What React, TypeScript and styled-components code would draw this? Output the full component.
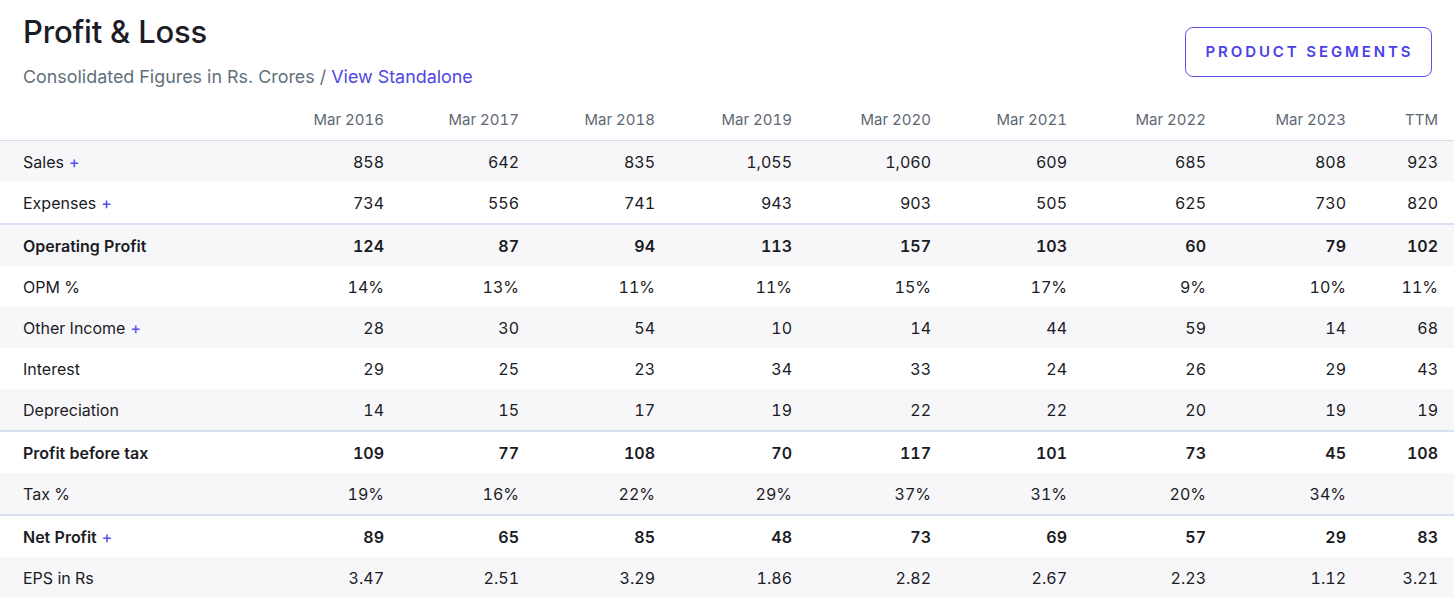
import styled, { createGlobalStyle } from 'styled-components';

const GlobalStyle = createGlobalStyle`
  body {
    margin: 0;
    background: #fff;
    font-family: Inter, "Noto Sans", sans-serif;
    color: #1f1f29;
  }
`;

// Styled components
const Page = styled.div`
  width: 1456px;
`;

const Header = styled.div`
  display: flex;
  justify-content: space-between;
  align-items: flex-start;
  padding: 0 24px 0 23px;
`;

const TitleBlock = styled.div`
  display: flex;
  flex-direction: column;
`;

const Title = styled.h2`
  margin: 12px 0 0;
  font-size: 31px;
  font-weight: 450;
  line-height: 40px;
  color: #1c1c27;
  letter-spacing: -0.2px;
`;

const SubTitle = styled.p`
  margin: 13px 0 0;
  font-size: 17.9px;
  line-height: 24px;
  color: #606f7b;
`;

const LinkText = styled.a`
  color: #4f46e5;
  text-decoration: none;
  cursor: pointer;
`;

const SegmentsButton = styled.button`
  margin-top: 27px;
  width: 247px;
  height: 50px;
  border: 1px solid #5b53f0;
  border-radius: 8px;
  background: #fff;
  color: #4a41e8;
  font-family: Inter, "Noto Sans", sans-serif;
  font-size: 15px;
  font-weight: 600;
  letter-spacing: 2.9px;
  text-transform: uppercase;
  padding: 0 0 2px 2px;
  cursor: pointer;
`;

const Table = styled.table`
  margin-top: 10px;
  width: 1454px;
  border-collapse: collapse;
  table-layout: fixed;
  font-size: 16px;
  font-variant-numeric: tabular-nums;
`;

const HeadCell = styled.th`
  height: 41px;
  padding: 0 16px 0 0;
  text-align: right;
  font-size: 15px;
  font-weight: 400;
  color: #5e6774;
  border-bottom: 1px solid #d6dde8;
  vertical-align: middle;
`;

const Row = styled.tr<{ $stripe: boolean; $strong: boolean }>`
  background: ${(p) => (p.$stripe ? '#f7f7fa' : '#fff')};
  font-weight: ${(p) => (p.$strong ? 600 : 400)};
  border-top: ${(p) => (p.$strong ? '2px solid #d8e1f1' : 'none')};
`;

const LabelCell = styled.td`
  height: 41px;
  padding: 0 0 0 23px;
  text-align: left;
  color: #1b1b24;
  vertical-align: middle;
`;

const NumCell = styled.td`
  height: 41px;
  padding: 0 16px 0 0;
  text-align: right;
  color: #1b1b24;
  vertical-align: middle;
`;

const Plus = styled.span`
  color: #5b52ee;
  font-weight: 500;
  margin-left: 5px;
`;

const years = ['Mar 2016', 'Mar 2017', 'Mar 2018', 'Mar 2019', 'Mar 2020', 'Mar 2021', 'Mar 2022', 'Mar 2023', 'TTM'];
const widths = [264, 136, 135, 136, 137, 139, 136, 139, 140, 92];

type Line = { label: string; plus?: boolean; strong?: boolean; values: string[] };

const rows: Line[] = [
  { label: 'Sales', plus: true, values: ['858', '642', '835', '1,055', '1,060', '609', '685', '808', '923'] },
  { label: 'Expenses', plus: true, values: ['734', '556', '741', '943', '903', '505', '625', '730', '820'] },
  { label: 'Operating Profit', strong: true, values: ['124', '87', '94', '113', '157', '103', '60', '79', '102'] },
  { label: 'OPM %', values: ['14%', '13%', '11%', '11%', '15%', '17%', '9%', '10%', '11%'] },
  { label: 'Other Income', plus: true, values: ['28', '30', '54', '10', '14', '44', '59', '14', '68'] },
  { label: 'Interest', values: ['29', '25', '23', '34', '33', '24', '26', '29', '43'] },
  { label: 'Depreciation', values: ['14', '15', '17', '19', '22', '22', '20', '19', '19'] },
  { label: 'Profit before tax', strong: true, values: ['109', '77', '108', '70', '117', '101', '73', '45', '108'] },
  { label: 'Tax %', values: ['19%', '16%', '22%', '29%', '37%', '31%', '20%', '34%', ''] },
  { label: 'Net Profit', plus: true, strong: true, values: ['89', '65', '85', '48', '73', '69', '57', '29', '83'] },
  { label: 'EPS in Rs', values: ['3.47', '2.51', '3.29', '1.86', '2.82', '2.67', '2.23', '1.12', '3.21'] },
];

export default function App() {
  return (
    <>
      <GlobalStyle />
      <Page>
        <Header>
          <TitleBlock>
            <Title>Profit &amp; Loss</Title>
            <SubTitle>
              Consolidated Figures in Rs. Crores / <LinkText>View Standalone</LinkText>
            </SubTitle>
          </TitleBlock>
          <SegmentsButton>Product Segments</SegmentsButton>
        </Header>
        <Table>
          <colgroup>
            {widths.map((w, i) => (
              <col key={i} style={{ width: w }} />
            ))}
          </colgroup>
          <thead>
            <tr>
              <HeadCell />
              {years.map((y) => (
                <HeadCell key={y}>{y}</HeadCell>
              ))}
            </tr>
          </thead>
          <tbody>
            {rows.map((r, i) => (
              <Row key={r.label} $stripe={i % 2 === 0} $strong={!!r.strong}>
                <LabelCell>
                  {r.label}
                  {r.plus && <Plus>+</Plus>}
                </LabelCell>
                {r.values.map((v, j) => (
                  <NumCell key={j}>{v}</NumCell>
                ))}
              </Row>
            ))}
          </tbody>
        </Table>
      </Page>
    </>
  );
}
